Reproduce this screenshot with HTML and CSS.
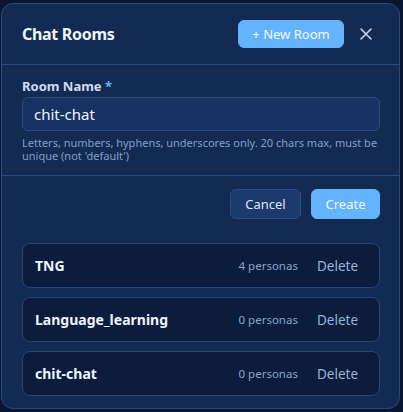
FILE: index.html
```html
<!DOCTYPE html>
<html lang="en">
<head>
<meta charset="utf-8">
<title>Chat Rooms</title>
<link rel="stylesheet" href="styles.css">
</head>
<body>
<div class="modal">
  <header class="modal-header">
    <h2 class="title">Chat Rooms</h2>
    <div class="header-actions">
      <button class="btn btn-primary btn-new">+ New Room</button>
      <button class="close" aria-label="Close">
        <svg width="12" height="12" viewBox="0 0 12 12"><path d="M1 1L11 11M11 1L1 11" stroke="currentColor" stroke-width="1.6" stroke-linecap="round"/></svg>
      </button>
    </div>
  </header>
  <section class="form">
    <label class="label">Room Name <span class="req">*</span></label>
    <div class="input">chit-chat</div>
    <p class="help">Letters, numbers, hyphens, underscores only. 20 chars max, must be unique (not 'default')</p>
  </section>
  <section class="body">
    <div class="actions">
      <button class="btn btn-secondary">Cancel</button>
      <button class="btn btn-primary">Create</button>
    </div>
    <ul class="rooms">
      <li class="room"><span class="room-name">TNG</span><span class="count">4 personas</span><button class="delete">Delete</button></li>
      <li class="room"><span class="room-name">Language_learning</span><span class="count">0 personas</span><button class="delete">Delete</button></li>
      <li class="room"><span class="room-name">chit-chat</span><span class="count">0 personas</span><button class="delete">Delete</button></li>
    </ul>
  </section>
</div>
</body>
</html>
```
FILE: styles.css
```css
* { box-sizing: border-box; }
html, body { margin: 0; padding: 0; }
body {
  background: #0b1630;
  font-family: "Noto Sans", "DejaVu Sans", sans-serif;
  color: #e6eefc;
  width: 403px;
  height: 412px;
  overflow: hidden;
}
.modal {
  margin: 3px 0 0 1px;
  width: 399px;
  height: 406px;
  background: #132a53;
  border: 1px solid #294a7c;
  border-radius: 12px;
  overflow: hidden;
}
.modal-header {
  height: 61px;
  display: flex;
  align-items: center;
  justify-content: space-between;
  padding: 0 19px 0 20px;
  border-bottom: 1px solid #294a7c;
}
.title {
  margin: 0;
  font-size: 16px;
  font-weight: 700;
  color: #eef4ff;
  letter-spacing: -0.3px;
}
.header-actions { display: flex; align-items: center; gap: 16px; }
.btn {
  font-family: inherit;
  border-radius: 6px;
  font-size: 13px;
  height: 30px;
  padding: 0 13px;
  cursor: pointer;
}
.btn-primary {
  background: #63b3fd;
  border: 1px solid #63b3fd;
  color: #f3f8ff;
}
.btn-new { height: 28px; width: 106px; padding: 0; }
.btn-secondary {
  background: #1c3a6b;
  border: 1px solid #2b4c80;
  color: #dce7f8;
  width: 71px;
  padding: 0;
}
.actions .btn-primary { width: 69px; padding: 0; }
.close {
  background: none;
  border: none;
  padding: 0;
  width: 12px;
  height: 12px;
  color: #c9d7ee;
  display: flex;
  margin-right: 8px;
}
.form {
  padding: 13px 19px 13px 20px;
  border-bottom: 1px solid #294a7c;
}
.label {
  display: block;
  font-size: 13px;
  font-weight: 700;
  line-height: 17px;
  color: #cfdcf1;
}
.req { color: #63b3fd; }
.input {
  margin-top: 2px;
  height: 34px;
  background: #173262;
  border: 1px solid #2b4c80;
  border-radius: 6px;
  padding: 0 11px;
  display: flex;
  align-items: center;
  font-size: 15px;
  color: #eef4ff;
}
.help {
  margin: 5px 0 0;
  font-size: 11px;
  line-height: 13px;
  color: #859fc4;
}
.body { padding: 13px 19px 0 20px; }
.actions {
  display: flex;
  justify-content: flex-end;
  gap: 10px;
}
.rooms {
  list-style: none;
  margin: 24px 0 0;
  padding: 0;
  display: flex;
  flex-direction: column;
  gap: 9px;
}
.room {
  height: 45px;
  display: flex;
  align-items: center;
  background: #0b1c3c;
  border: 1px solid #264677;
  border-radius: 8px;
  padding: 0 21px 0 12px;
}
.room-name {
  flex: 1;
  font-size: 14px;
  font-weight: 700;
  color: #eef4ff;
}
.count {
  font-size: 11.5px;
  color: #8aa4c9;
  margin-right: 19px;
}
.delete {
  background: none;
  border: none;
  padding: 0;
  font-family: inherit;
  font-size: 13.5px;
  color: #9bb5d8;
  cursor: pointer;
}
```
